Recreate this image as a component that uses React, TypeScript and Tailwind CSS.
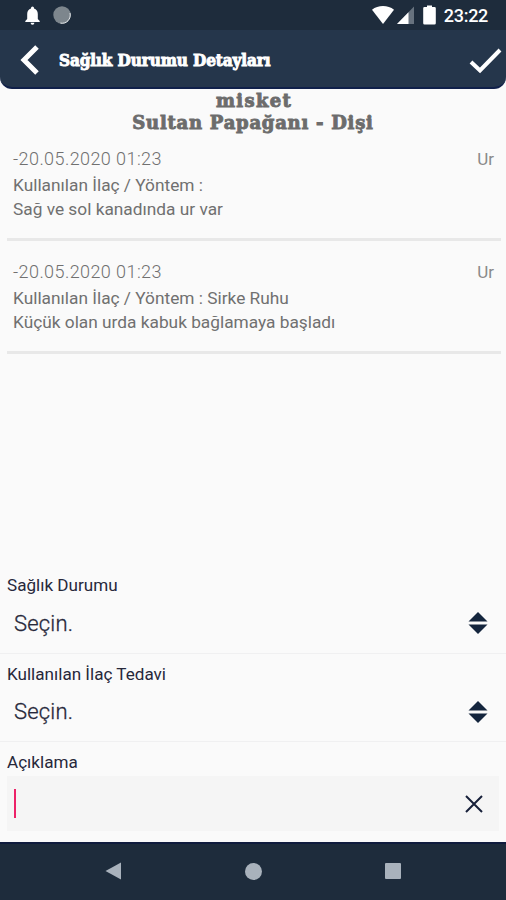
const records = [
  {
    date: "-20.05.2020 01:23",
    status: "Ur",
    treatment: "Kullanılan İlaç / Yöntem :",
    note: "Sağ ve sol kanadında ur var"
  },
  {
    date: "-20.05.2020 01:23",
    status: "Ur",
    treatment: "Kullanılan İlaç / Yöntem : Sirke Ruhu",
    note: "Küçük olan urda kabuk bağlamaya başladı"
  },
]

const StatusBar = () => {
  return (
    <div className="flex h-[30px] items-center bg-[#1e2c3c] pl-[25px] pr-[18px] text-white">
      <svg width="15" height="19" viewBox="0 0 15 19" fill="currentColor">
        <path d="M7.5 0.5a1.5 1.5 0 0 0-1.5 1.5v0.6C3.6 3.3 2.2 5.4 2.2 8v5L0.3 15v1h14.4v-1l-1.9-2V8c0-2.6-1.4-4.7-3.8-5.4V2A1.5 1.5 0 0 0 7.5 0.5zM5.6 16.8a1.9 1.9 0 0 0 3.8 0z" />
      </svg>
      <svg className="ml-[13px]" width="18" height="18" viewBox="0 0 18 18">
        <circle cx="9" cy="9" r="8.7" fill="#7d868d" />
        <path d="M17 7A8.2 8.2 0 0 1 7.4 17.1" fill="none" stroke="#e4e8ea" strokeWidth="1" />
      </svg>
      <div className="ml-auto flex items-center">
        <svg width="22" height="18" viewBox="0 0 22 18" fill="currentColor">
          <path d="M0 3.8C6-1.2 16-1.2 22 3.8L11 18z" />
        </svg>
        <svg className="ml-[3px]" width="17" height="18" viewBox="0 0 17 18">
          <path d="M17 0.5V18H0z" fill="#67727e" />
          <path d="M11.5 6.2V18H0z" fill="#fff" />
        </svg>
        <svg className="ml-[9px]" width="13" height="20" viewBox="0 0 13 20" fill="currentColor">
          <path d="M4 0.5h5V2h2.5A1.3 1.3 0 0 1 12.8 3.3v15a1.3 1.3 0 0 1-1.3 1.3h-10a1.3 1.3 0 0 1-1.3-1.3v-15A1.3 1.3 0 0 1 1.5 2H4z" />
        </svg>
        <span className="ml-[8px] mt-px text-[18px] font-medium leading-none tracking-[-0.3px]">23:22</span>
      </div>
    </div>
  )
}

const Header = () => {
  return (
    <div className="flex h-[59px] items-center rounded-b-[12px] border-b-2 border-[#10204a] bg-[#25364b] pl-5 pr-[4px] text-white">
      <svg className="mt-[3px]" width="20" height="30" viewBox="0 0 20 30" fill="none" stroke="currentColor" strokeWidth="5">
        <path d="M17 2L4 15L17 28" />
      </svg>
      <h1 className="ml-[19px] mt-[4px] whitespace-nowrap font-['DejaVu_Serif_Condensed','DejaVu_Serif',serif] text-[17px] font-bold tracking-[-0.1px] [-webkit-text-stroke:0.9px_white]">Sağlık Durumu Detayları</h1>
      <svg className="ml-auto mt-[4px]" width="33" height="26" viewBox="0 0 33 26" fill="none" stroke="currentColor" strokeWidth="4">
        <path d="M2 14L11 22.5L31 2" />
      </svg>
    </div>
  )
}

const SelectField = ({ label }: { label: string }) => {
  return (
    <div className="h-[88.5px] border-b border-[#f0f0f1] pl-[7px] pt-[8px] text-[#27283a]">
      <div className="text-[17.1px] leading-[24px]">{label}</div>
      <div className="flex h-[52px] items-center justify-between pl-[7px] pr-[18px]">
        <span className="text-[22px] font-light [-webkit-text-stroke:0.3px_#27283a] tracking-[0.2px]">Seçin.</span>
        <svg width="20" height="22" viewBox="0 0 20 22" fill="#14253d">
          <path d="M10 0L19.5 9.5H0.5z" />
          <path d="M0.5 12.5h19L10 22z" />
        </svg>
      </div>
    </div>
  )
}

const NavigationBar = () => {
  return (
    <div className="flex h-[58px] items-center justify-between border-t-2 border-[#101c3e] bg-[#1e2c3c] pb-[2px] pl-[105px] pr-[105px]">
      <svg width="17" height="18" viewBox="0 0 17 18" fill="#a9b2bc">
        <path d="M16 0.5v17L0.5 9z" />
      </svg>
      <div className="h-[17px] w-[17px] rounded-full bg-[#a9b2bc]" />
      <div className="h-4 w-4 rounded-[1px] bg-[#a9b2bc]" />
    </div>
  )
}

const App = () => {
  return (
    <div className="flex h-[900px] w-[506px] flex-col overflow-hidden bg-[#fafafa] font-[Roboto,sans-serif]">
      <StatusBar />
      <Header />
      <div className="h-[45px] pt-px text-center font-['DejaVu_Serif',serif] text-[18px] font-bold leading-[22px] tracking-[0.75px] text-[#6c6c6c] [-webkit-text-stroke:0.9px_#6c6c6c]">
        <div className="pl-[2px] tracking-[1.3px]">misket</div>
        <div>Sultan Papağanı - Dişi</div>
      </div>
      <div className="pl-[7px] pr-[5px]">
        {
          records.map((record, index) => (
            <div key={index} className={`border-b-[3px] border-[#e8e8e8] pl-[6px] pr-[7px] text-[#707070] ${index === 0 ? "h-[107px] pt-[12px]" : "h-[113px] pt-[18px]"}`}>
              <div className="flex justify-between text-[18px] font-light leading-[26px]">
                <span className="tracking-[0.42px]">{record.date}</span>
                <span className="text-[17px] font-normal text-[#8a8a8a]">{record.status}</span>
              </div>
              <div className="pt-px text-[17.3px] leading-6">{record.treatment}</div>
              <div className="text-[17.3px] leading-6">{record.note}</div>
            </div>
          ))
        }
      </div>
      <div className="mt-auto">
        <SelectField label="Sağlık Durumu" />
        <SelectField label="Kullanılan İlaç Tedavi" />
        <div className="h-[100px] px-[7px] pt-[8px] text-[#27283a]">
          <div className="text-[17.1px] leading-6">Açıklama</div>
          <div className="mt-[2px] flex h-[55px] items-center justify-between bg-[#f5f5f5] pl-[7px] pr-[16px]">
            <div className="h-[29px] w-[2px] bg-[#ed2268]" />
            <svg width="18" height="18" viewBox="0 0 18 18" fill="none" stroke="#17203a" strokeWidth="2">
              <path d="M1 1l16 16M17 1L1 17" />
            </svg>
          </div>
        </div>
      </div>
      <NavigationBar />
    </div>
  )
}
export default App
